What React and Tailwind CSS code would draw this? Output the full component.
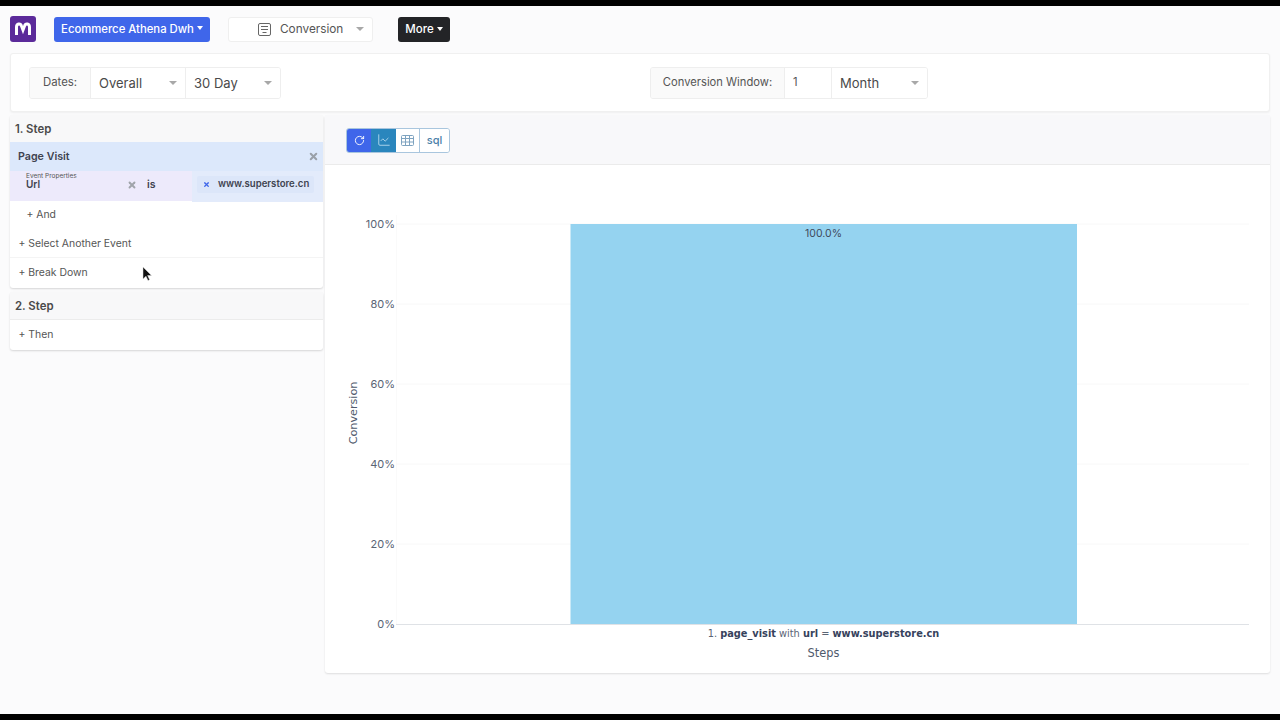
import React from "react";
import { RotateCw, LineChart, X } from "lucide-react";

const Caret = ({ className = "" }) => (
  <span className={`inline-block w-0 h-0 border-x-[4px] border-x-transparent border-t-[4px] border-t-[#a8a8a8] ${className}`} />
);
const WhiteCaret = () => (
  <span className="inline-block w-0 h-0 border-x-[3.5px] border-x-transparent border-t-[4px] border-t-white ml-[3px] mb-[2px]" />
);

function Select({ label, width }) {
  return (
    <div className={`flex items-center justify-between bg-white border-l border-[#eeeeee] pl-2 pr-[8px] text-[13px] text-[#4a4a4a] ${width}`}>
      <span className="pt-[2px]">{label}</span>
      <Caret className="mt-[1px]" />
    </div>
  );
}

function Chart() {
  const ticks = [
    ["100%", 59],
    ["80%", 139],
    ["60%", 219],
    ["40%", 299],
    ["20%", 379],
  ];
  const dejavu = { fontFamily: "'DejaVu Sans', sans-serif" };
  return (
    <svg width="944" height="507" className="block" style={{ fontFamily: "Inter, sans-serif" }}>
      <line x1="71.5" x2="71.5" y1="50" y2="459" stroke="#fafafa" />
      {ticks.map(([t, y]) => (
        <g key={t}>
          <line x1="71" x2="924" y1={y} y2={y} stroke="#f8f8f8" />
          <text x="70" y={y + 4} textAnchor="end" fontSize="11" fill="#5a6474">{t}</text>
        </g>
      ))}
      <text x="70" y="463" textAnchor="end" fontSize="11" fill="#5a6474">0%</text>
      <rect x="245.5" y="59" width="506.5" height="400" fill="#95d3f0" />
      <line x1="71" x2="924" y1="459.5" y2="459.5" stroke="#dfe2e6" />
      <text x="498.5" y="71.5" textAnchor="middle" fontSize="10.5" fill="#3f4a5c">100.0%</text>
      <text x="498.5" y="472" textAnchor="middle" fill="#5a6474" style={{ ...dejavu, fontSize: "9.8px" }}>
        1. <tspan fontWeight="700" fill="#36425c">page_visit</tspan> with <tspan fontWeight="700" fill="#36425c">url</tspan> = <tspan fontWeight="700" fill="#36425c">www.superstore.cn</tspan>
      </text>
      <text x="498.5" y="492" textAnchor="middle" fill="#4f5a6c" style={{ ...dejavu, fontSize: "11.4px" }}>Steps</text>
      <text transform="translate(32 248) rotate(-90)" textAnchor="middle" fill="#4f5a6c" style={{ ...dejavu, fontSize: "11.2px" }}>Conversion</text>
    </svg>
  );
}

export default function App() {
  return (
    <div className="relative h-[720px] w-[1280px] overflow-hidden flex flex-col bg-[#fbfbfc] text-[#444] font-['Inter',sans-serif]">
      <div className="h-[6px] bg-black shrink-0" />

      {/* Top nav */}
      <div className="h-[47px] shrink-0 flex items-center pl-[10px] pb-[1px]">
        <div className="w-[26px] h-[26px] rounded-[3px] bg-[#5b2a9a] flex items-center justify-center">
          <svg width="18" height="14" viewBox="0 0 18 14" fill="none">
            <path d="M2.5 13V5C2.5 1.5 6.5 1 7.5 4L9 8l1.5-4c1-3 5-2.5 5 1V13" stroke="white" strokeWidth="3" />
          </svg>
        </div>
        <div className="ml-[18px] w-[156px] h-[25px] rounded-[3px] bg-[#3f66ea] text-white text-[11.3px] font-medium flex items-center justify-center">
          Ecommerce Athena Dwh<WhiteCaret />
        </div>
        <div className="ml-[18px] w-[145px] h-[25px] rounded-[3px] bg-white border border-[#efefef] flex items-center pl-[29px] text-[11.8px] text-[#555]">
          <svg width="13" height="13" viewBox="0 0 13 13" fill="none" stroke="#666" strokeWidth="1">
            <rect x="0.5" y="0.5" width="12" height="12" rx="1.5" />
            <path d="M3 3.5h7M3 6.5h7M4.5 9.5h4" />
          </svg>
          <span className="ml-[9px] pt-[2px]">Conversion</span>
          <Caret className="ml-[13px]" />
        </div>
        <div className="ml-[25px] w-[52px] h-[25px] rounded-[3px] bg-[#232427] text-white text-[11.5px] font-medium flex items-center justify-center pt-[1px]">
          More<WhiteCaret />
        </div>
      </div>

      {/* Filter bar */}
      <div className="mx-[10px] h-[59px] shrink-0 bg-white border border-[#f0f0f0] rounded-[3px] shadow-[0_1px_2px_rgba(0,0,0,0.05)] flex items-center justify-between pl-[18px] pr-[341px]">
        <div className="flex h-[32px] border border-[#eeeeee] rounded-[3px] overflow-hidden">
          <div className="w-[60px] bg-[#fafafa] flex items-center justify-center text-[11.4px] text-[#555]">Dates:</div>
          <Select label="Overall" width="w-[95px]" />
          <Select label="30 Day" width="w-[95px]" />
        </div>
        <div className="flex h-[32px] border border-[#eeeeee] rounded-[3px] overflow-hidden">
          <div className="w-[133px] bg-[#fafafa] flex items-center justify-center text-[11.2px] text-[#555]">Conversion Window:</div>
          <div className="w-[47px] bg-white border-l border-[#eeeeee] pl-[8px] flex items-center text-[11.2px] text-[#555]">1</div>
          <Select label="Month" width="w-[96px]" />
        </div>
      </div>

      {/* Main */}
      <div className="flex mx-[10px] mt-[3px] gap-[2px] items-start">
        {/* Left column */}
        <div className="w-[313px] shrink-0 flex flex-col gap-[4px]">
          <div className="bg-white rounded-[3px] shadow-[0_1px_2px_rgba(0,0,0,0.15)]">
            <div className="h-[27px] bg-[#f8f8f9] pl-[5px] pt-[2px] flex items-center text-[11.4px] font-semibold text-[#4a4a4a]">1. Step</div>
            <div className="h-[29px] bg-[#dce8fb] pl-[8px] pr-[4px] flex items-center justify-between text-[10.7px] font-semibold text-[#3f4350]">
              <span className="pt-[2px]">Page Visit</span>
              <X size={11} strokeWidth={4.5} className="text-[#9aa0a8]" />
            </div>
            <div className="h-[30px] bg-[#edeafb] flex">
              <div className="w-[117px] pl-[16px] flex flex-col justify-center pb-[10px]">
                <span className="text-[6.5px] leading-[6px] text-[#555]">Event Properties</span>
                <span className="text-[10px] leading-[10px] font-semibold text-[#3f4350]">Url</span>
              </div>
              <div className="w-[65px] flex items-center pb-[2px]">
                <X size={10} strokeWidth={4.5} className="text-[#a0a4aa]" />
                <span className="ml-[10px] text-[10.5px] font-semibold text-[#3f4350]">is</span>
              </div>
              <div className="w-[131px] h-[31px] bg-[#e3ebfb] flex items-start pt-[5px] pl-[5px] pr-[9px]">
                <div className="w-[117px] h-[17px] bg-[#dce6f9] rounded-[2px] flex items-center pl-[6px] text-[9.6px] font-semibold text-[#3f4350]">
                  <X size={7} strokeWidth={4.5} className="text-[#3f66ea] shrink-0" />
                  <span className="ml-[8px] whitespace-nowrap">www.superstore.cn</span>
                </div>
              </div>
            </div>
            <div className="h-[28px] pl-[16.5px] flex items-center text-[10.4px] text-[#555]">+ And</div>
            <div className="h-[29px] pl-[8.5px] pt-[2px] flex items-center text-[10.4px] text-[#555] border-b border-[#f4f4f4]">+ Select Another Event</div>
            <div className="h-[30px] pl-[8.5px] flex items-center text-[10.4px] text-[#555]">+ Break Down</div>
          </div>
          <div className="bg-white rounded-[3px] shadow-[0_1px_2px_rgba(0,0,0,0.15)]">
            <div className="h-[28px] bg-[#f8f8f9] pl-[5px] pt-[3px] flex items-center text-[11.4px] font-semibold text-[#4a4a4a] border-b border-[#ececec]">2. Step</div>
            <div className="h-[30px] pl-[8.5px] flex items-center text-[10.4px] text-[#555]">+ Then</div>
          </div>
        </div>

        {/* Right panel */}
        <div className="w-[945px] h-[558px] bg-white rounded-[3px] shadow-[0_1px_2px_rgba(0,0,0,0.12)] flex flex-col">
          <div className="h-[50px] shrink-0 bg-[#f8f8fa] border-b border-[#ebebeb] flex items-center pl-[21px] pt-[1px]">
            <div className="flex h-[25px] rounded-[3px] overflow-hidden border border-[#a9c6de]">
              <div className="w-[24px] bg-[#3f66ea] flex items-center justify-center">
                <RotateCw size={11} className="text-white" />
              </div>
              <div className="w-[25px] bg-[#2a86bd] flex items-center justify-center">
                <LineChart size={14} strokeWidth={1.4} className="text-[#c2e1f3]" />
              </div>
              <div className="w-[24px] bg-white border-r border-[#a9c6de] flex items-center justify-center">
                <svg width="13" height="13" viewBox="0 0 13 13" fill="none" stroke="#7ea3c0" strokeWidth="1">
                  <rect x="0.5" y="1.5" width="12" height="10" rx="1" />
                  <path d="M0.5 4.5h12M0.5 8h12M4.5 1.5v10M8.5 1.5v10" />
                </svg>
              </div>
              <div className="w-[29px] bg-white flex items-center justify-center text-[11px] font-medium text-[#4b80a8]">sql</div>
            </div>
          </div>
          <Chart />
        </div>
      </div>

      {/* Mouse pointer */}
      <svg className="absolute left-[142px] top-[267px]" width="10" height="16" viewBox="0 0 10 16">
        <path d="M1 0v12l3-2.8 2 4.3 1.6-.8-2-4.2H9.5z" fill="#111" stroke="#ddd" strokeWidth="0.5" />
      </svg>

      <div className="absolute left-0 bottom-0 w-[1280px] h-[6px] bg-black" />
    </div>
  );
}
